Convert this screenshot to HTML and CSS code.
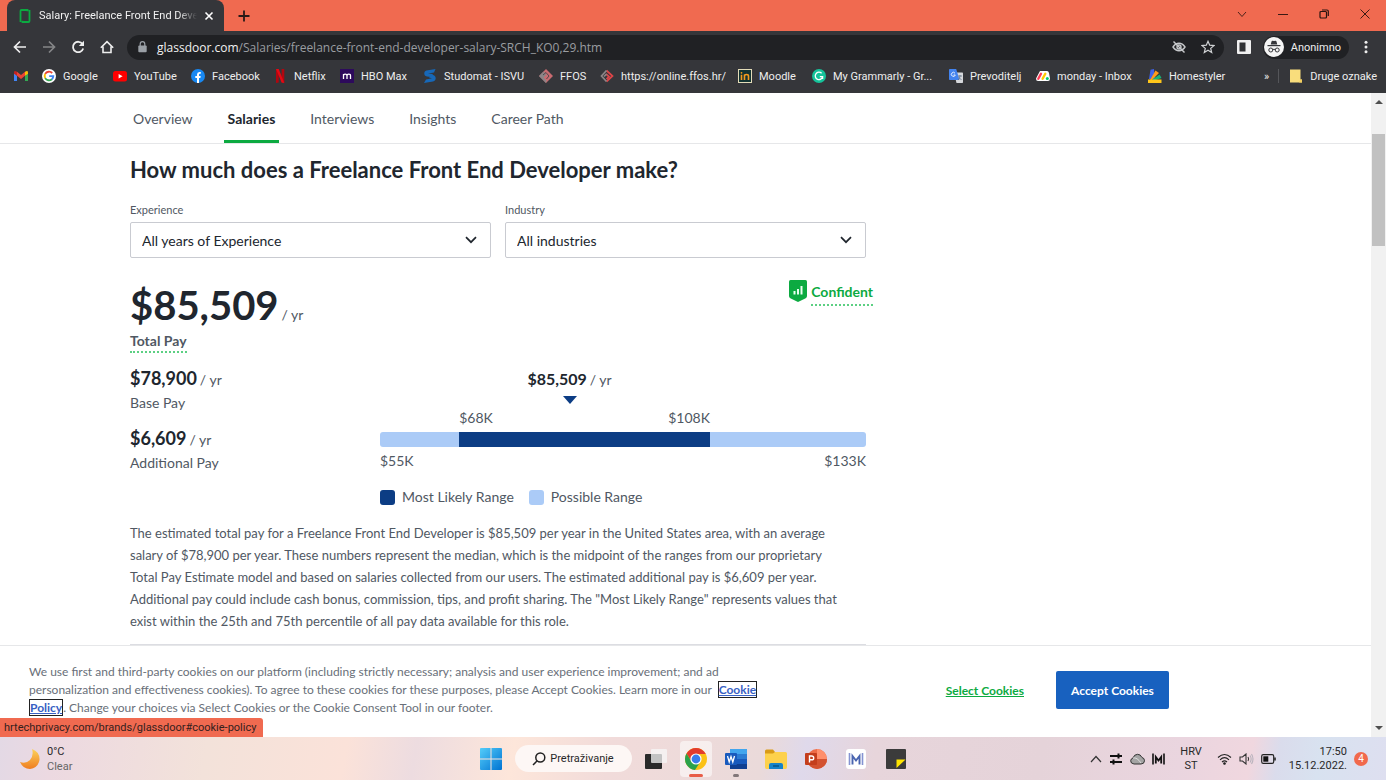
FILE: index.html
```html
<!DOCTYPE html>
<html lang="en">
<head>
<meta charset="utf-8">
<title>Salary: Freelance Front End Developer</title>
<link rel="stylesheet" href="styles.css">
</head>
<body>
<div class="tabstrip">
  <div class="tab">
    <svg class="tab-logo" viewBox="0 0 12 16" width="12" height="16" fill="none" stroke="#0caa41" stroke-width="1.800"><path d="M1.500 11.500V3Q1.500 2 2.500 2H8.500M10.500 4.500V13Q10.500 14 9.500 14H3.500M8.500 1.100V3.200M10.500 4.500V2M3.500 12.800V14.900M1.500 11.500V14"/></svg>
    <span class="tab-title">Salary: Freelance Front End Devel</span>
    <button class="tab-close" aria-label="Close tab"><svg viewBox="0 0 10 10" width="10" height="10" stroke="#fff" stroke-width="1.600"><path d="M1.500 1.500l7 7M8.500 1.500l-7 7"/></svg></button>
  </div>
  <button class="icon-btn" aria-label="New tab"><svg viewBox="0 0 12 12" width="12" height="12" stroke="#2a1a18" stroke-width="1.800"><path d="M6 .5v11M.5 6h11"/></svg></button>
  <div class="window-controls">
    <button class="icon-btn" aria-label="Search tabs"><svg viewBox="0 0 10 10" width="10" height="10" fill="none" stroke="#4b231b"><path d="M1 3l4 4.500L9 3"/></svg></button>
    <button class="icon-btn" aria-label="Minimize"><svg viewBox="0 0 10 10" width="10" height="10" stroke="#3a1a14"><path d="M0 5.500h10"/></svg></button>
    <button class="icon-btn" aria-label="Restore"><svg viewBox="0 0 10 10" width="10" height="10" fill="none" stroke="#2a1410" stroke-width="1.200"><rect x="1" y="2.500" width="6.500" height="6.500" rx="1"/><path d="M3 1h5q1.300 0 1.300 1.300V7"/></svg></button>
    <button class="icon-btn" aria-label="Close"><svg viewBox="0 0 10 10" width="10" height="10" stroke="#3a1a14"><path d="M.5 .5l9 9M9.500 .5l-9 9"/></svg></button>
  </div>
</div>

<div class="toolbar">
  <div class="nav-buttons">
    <button class="icon-btn" aria-label="Back"><svg viewBox="0 0 14 14" width="14" height="14" fill="none" stroke="#eee" stroke-width="1.700"><path d="M13 7H2M7 1.500L1.500 7L7 12.500"/></svg></button>
    <button class="icon-btn" aria-label="Forward"><svg viewBox="0 0 14 14" width="14" height="14" fill="none" stroke="#858688" stroke-width="1.700"><path d="M1 7h11M7 1.500L12.500 7L7 12.500"/></svg></button>
    <button class="icon-btn" aria-label="Reload"><svg viewBox="0 0 14 14" width="14" height="14" fill="none" stroke="#eee" stroke-width="1.800"><path d="M11.500 4A5.200 5.200 0 1 0 12.200 8.500"/><path d="M13 .8V6H7.800z" fill="#eee" stroke="none"/></svg></button>
    <button class="icon-btn" aria-label="Home"><svg viewBox="0 0 14 14" width="14" height="14" fill="none" stroke="#eee" stroke-width="1.600"><path d="M.8 7.800L7 1.600L13.200 7.800M3 6.500V12.500H11V6.500"/></svg></button>
  </div>
  <div class="omnibox">
    <svg viewBox="0 0 9 12" width="9" height="12"><path d="M2.200 5V3a2.300 2.300 0 0 1 4.600 0v2" fill="none" stroke="#9aa0a6" stroke-width="1.200"/><rect x=".3" y="4.500" width="8.400" height="6.800" rx="1" fill="#9aa0a6"/></svg>
    <span class="url"><span class="host">glassdoor.com</span>/Salaries/freelance-front-end-developer-salary-SRCH_KO0,29.htm</span>
    <button class="icon-btn" aria-label="Third-party cookies blocked"><svg viewBox="0 0 14 14" width="14" height="14" fill="none" stroke="#c7c9cc" stroke-width="1.400"><path d="M1 7Q3.500 3.200 7 3.200T13 7Q10.500 10.800 7 10.800T1 7z"/><circle cx="7" cy="7" r="2"/><path d="M1.500 1.500l11 11"/></svg></button>
    <button class="icon-btn" aria-label="Bookmark"><svg viewBox="0 0 14 14" width="14" height="14" fill="none" stroke="#d0d2d4" stroke-width="1.200"><path d="M7 1.300l1.700 3.900 4.200.4-3.200 2.800 1 4.100L7 10.300l-3.700 2.200 1-4.100L1.100 5.600l4.200-.4z"/></svg></button>
  </div>
  <button class="icon-btn panel-btn" aria-label="Side panel"><svg viewBox="0 0 14 14" width="14" height="14"><rect width="14" height="14" rx="1" fill="#f1f1f1"/><rect x="2.500" y="2.500" width="6" height="9" fill="#303134"/></svg></button>
  <button class="profile"><svg viewBox="0 0 20 20" width="20" height="20"><circle cx="10" cy="10" r="10" fill="#f5f5f5"/><path d="M6.700 7.500L7.600 4.200q.2-.6.900-.5l1.500.3 1.500-.3q.7-.1.900.5l.9 3.300z" fill="#35363a"/><rect x="3.500" y="8" width="13" height="1.200" fill="#35363a"/><g fill="none" stroke="#35363a"><circle cx="6.800" cy="13" r="2"/><circle cx="13.200" cy="13" r="2"/><path d="M8.800 12.600q1.200-.8 2.400 0"/></g></svg>Anonimno</button>
  <button class="icon-btn menu-btn" aria-label="Menu"><svg viewBox="0 0 4 14" width="4" height="14" fill="#eee"><circle cx="2" cy="2.200" r="1.500"/><circle cx="2" cy="7" r="1.500"/><circle cx="2" cy="11.800" r="1.500"/></svg></button>
</div>

<nav class="bookmarks" aria-label="Bookmarks">
  <a href="#" aria-label="Gmail"><svg viewBox="0 0 14 14" width="14" height="14"><path d="M0 3.500V12h3V6.500z" fill="#4285f4"/><path d="M14 3.500V12h-3V6.500z" fill="#34a853"/><path d="M3 2.800L7 6l4-3.200v4L7 10 3 6.800z" fill="#ea4335"/><path d="M0 3.500Q0 1 3 2.700v4.100L0 4.800z" fill="#c5221f"/><path d="M14 3.500Q14 1 11 2.700v4.100l3-2z" fill="#fbbc04"/></svg></a>
  <a href="#"><svg viewBox="0 0 14 14" width="14" height="14"><circle cx="7" cy="7" r="7" fill="#fff"/><g fill="none" stroke-width="1.900"><path d="M10.200 4A4.400 4.400 0 0 0 3.200 4.900" stroke="#ea4335"/><path d="M3.200 4.900A4.400 4.400 0 0 0 3.200 9.100" stroke="#fbbc05"/><path d="M3.200 9.100A4.400 4.400 0 0 0 9.900 10.300" stroke="#34a853"/><path d="M9.900 10.300A4.400 4.400 0 0 0 11.300 7.100H7.200" stroke="#4285f4"/></g></svg>Google</a>
  <a href="#"><svg viewBox="0 0 14 14" width="14" height="14"><rect y="2" width="14" height="10.500" rx="2.500" fill="#f00"/><path d="M5.600 5v4.500l4-2.250z" fill="#fff"/></svg>YouTube</a>
  <a href="#"><svg viewBox="0 0 14 14" width="14" height="14"><circle cx="7" cy="7" r="7" fill="#1888f2"/><path d="M6 14V9H4.300V7H6V5.500q0-2.500 2.400-2.500l1.400.1v1.700h-.9q-.9 0-.9.900V7h1.700l-.3 2H8v5z" fill="#fff"/></svg>Facebook</a>
  <a href="#"><svg viewBox="0 0 14 14" width="14" height="14"><path d="M3 0h2.700v13.600L3 14zM8.600 0h2.700v14l-2.700-.4z" fill="#b1060f"/><path d="M3 0h2.700l5.600 14-2.700-.4z" fill="#e50914"/></svg>Netflix</a>
  <a href="#"><svg viewBox="0 0 14 14" width="14" height="14"><rect width="14" height="14" fill="#2d0a5c"/><path d="M3.500 10V5M3.500 6.800q0-1.700 1.700-1.700T7 6.800V10M7 6.800q0-1.700 1.800-1.700t1.700 1.700V10" fill="none" stroke="#fff" stroke-width="1.300"/></svg>HBO Max</a>
  <a href="#"><svg viewBox="0 0 14 14" width="14" height="14" fill="#1768b8"><path d="M12.500 0L3.500 1.500Q1 2.200 1.300 5q.3 2.700 4.700 2.800L8 8l2-3-5-.5L11 3.500z"/><path d="M1 14l9-1.500q2.800-.7 2.700-3.500Q12.500 6 8.500 5.800L6 8.500l3 .7L3 10.500z"/></svg>Studomat - ISVU</a>
  <a href="#"><svg viewBox="0 0 14 14" width="14" height="14"><path d="M0 7l7-7 7 7-7 7z" fill="#c96b70"/><path d="M0 7l4.500-4.500 3 3L4.500 8.500l3 3L7 14z" fill="#8b8587"/><path d="M4 6l3-2.500 3 3.500-2.500 3" fill="none" stroke="#55474b"/></svg>FFOS</a>
  <a href="#"><svg viewBox="0 0 14 14" width="14" height="14" fill="none" stroke-width="1.700"><path d="M6.500 1.500L12.500 7l-6 5.500M6 5l3 2.500-2.500 2.500" stroke="#dd4548"/><path d="M6.500 1.500L1.500 7l5 5.500M4 7.500L6.500 5" stroke="#8d8587"/></svg>https://online.ffos.hr/</a>
  <a href="#"><svg viewBox="0 0 14 14" width="14" height="14"><rect x=".5" y=".5" width="13" height="13" fill="#123332" stroke="#e3dcb8"/><path d="M3.500 5.800V11M6.500 11V5.500M6.500 7q0-1.500 2-1.500t2 1.500V11" fill="none" stroke="#f39a1d" stroke-width="1.600"/><circle cx="3.500" cy="3.800" r=".9" fill="#f39a1d"/></svg>Moodle</a>
  <a href="#"><svg viewBox="0 0 14 14" width="14" height="14"><circle cx="7" cy="7" r="7" fill="#15c39a"/><path d="M9.600 4.300A3.700 3.700 0 1 0 10.600 7.600H7.800M10.600 7.600V10" fill="none" stroke="#fff" stroke-width="1.300"/></svg>My Grammarly - Gr...</a>
  <a href="#"><svg viewBox="0 0 14 14" width="14" height="14"><path d="M5 3.500h8.300q.7 0 .7.700v9q0 .8-.7.800H7.500z" fill="#d6d8dc"/><path d="M.8 0h6.400L10.500 11H.8Q0 11 0 10.200V.8Q0 0 .8 0z" fill="#4283ef"/><path d="M6 4.200A2 2 0 1 0 6.300 6H4.500" fill="none" stroke="#e7efff"/><path d="M9 7h4M11 6v1q0 2.500-2 4M10 8.500l2.500 2.500" stroke="#5f7186" fill="none" stroke-width=".8"/></svg>Prevoditelj</a>
  <a href="#"><svg viewBox="0 0 14 14" width="14" height="14"><path d="M4 2h7q1.500 0 2 2l1 5.500Q14 12 12 12H2q-2 0-2-2.500Z" fill="#fff"/><g stroke-width="2.400" stroke-linecap="round"><path d="M2.300 9.800l2.700-5" stroke="#ff3d57"/><path d="M6.600 9.800l2.700-5" stroke="#ffcb00"/></g><circle cx="11.300" cy="9.600" r="1.500" fill="#00ca72"/></svg>monday - Inbox</a>
  <a href="#"><svg viewBox="0 0 14 14" width="14" height="14"><path d="M2.500.7L6 0 7 10H1z" fill="#3f63e8"/><path d="M7.500 1.500L11 4 4 11H2z" fill="#ff9c1a"/><path d="M11.500 5.500L13.500 9 5 12H2z" fill="#18b277"/><path d="M0 10.500h13.500V14H0z" fill="#ffc61a"/></svg>Homestyler</a>
  <button class="more" aria-label="More bookmarks">»</button>
  <a class="other" href="#"><svg viewBox="0 0 14 14" width="14" height="14"><path d="M1 .5h10.500v10H13V13.500H1z" fill="#f9dd7c"/><path d="M11.500 10.500H13v3h-3z" fill="#f3cf5f"/></svg>Druge oznake</a>
</nav>

<div class="viewport">
  <div class="page">
    <nav class="site-nav" aria-label="Sections">
      <a href="#">Overview</a>
      <a href="#" class="active" aria-current="page">Salaries</a>
      <a href="#">Interviews</a>
      <a href="#">Insights</a>
      <a href="#">Career Path</a>
    </nav>
    <main class="content">
      <h1>How much does a Freelance Front End Developer make?</h1>
      <form class="filters">
        <div class="field">
          <label for="experience">Experience</label>
          <div class="select-box">
            <select id="experience"><option>All years of Experience</option></select>
            <svg viewBox="0 0 12 8" width="12" height="8" fill="none" stroke="#20262e" stroke-width="1.700"><path d="M1 1.200l5 5 5-5"/></svg>
          </div>
        </div>
        <div class="field">
          <label for="industry">Industry</label>
          <div class="select-box">
            <select id="industry"><option>All industries</option></select>
            <svg viewBox="0 0 12 8" width="12" height="8" fill="none" stroke="#20262e" stroke-width="1.700"><path d="M1 1.200l5 5 5-5"/></svg>
          </div>
        </div>
      </form>
      <div class="total">
        <div>
          <div class="amount total-value"><strong>$85,509</strong><span>/ yr</span></div>
          <a href="#" class="hint total-label">Total Pay</a>
        </div>
        <div class="confidence">
          <svg viewBox="0 0 18 22" width="18" height="22"><path d="M1.500 0h15Q18 0 18 1.500V16q0 1.500-1.300 2.300L9 22 1.300 18.300Q0 17.500 0 16V1.500Q0 0 1.500 0z" fill="#0caa41"/><path d="M5.500 14.500V11M9 14.500V9M12.500 14.500V6" stroke="#e8fff0" stroke-width="2"/></svg>
          <a href="#" class="hint">Confident</a>
        </div>
      </div>
      <div class="breakdown">
        <dl class="pays">
          <div><dt>Base Pay</dt><dd class="amount"><strong>$78,900</strong><span>/ yr</span></dd></div>
          <div><dt>Additional Pay</dt><dd class="amount"><strong>$6,609</strong><span>/ yr</span></dd></div>
        </dl>
        <div class="chart">
          <div class="median" style="width:78%"><div class="amount"><strong>$85,509</strong><span>/ yr</span></div><svg viewBox="0 0 14 8" width="14" height="8"><path d="M0 0h14L7 8z" fill="#0c3d84"/></svg></div>
          <div class="likely-labels" style="margin-left:16.300%;width:51.600%"><span>$68K</span><span>$108K</span></div>
          <div class="bar"><div class="likely" style="margin-left:16.300%;width:51.600%"></div></div>
          <div class="range-labels"><span>$55K</span><span>$133K</span></div>
          <div class="legend"><span class="key key-likely">Most Likely Range</span><span class="key key-possible">Possible Range</span></div>
        </div>
      </div>
      <p class="summary">The estimated total pay for a Freelance Front End Developer is $85,509 per year in the United States area, with an average salary of $78,900 per year. These numbers represent the median, which is the midpoint of the ranges from our proprietary Total Pay Estimate model and based on salaries collected from our users. The estimated additional pay is $6,609 per year. Additional pay could include cash bonus, commission, tips, and profit sharing. The "Most Likely Range" represents values that exist within the 25th and 75th percentile of all pay data available for this role.</p>
      <hr class="divider">
    </main>
    <section class="cookies" aria-label="Cookie consent">
      <p>We use first and third-party cookies on our platform (including strictly necessary; analysis and user experience improvement; and ad personalization and effectiveness cookies). To agree to these cookies for these purposes, please Accept Cookies. Learn more in our &nbsp;<a href="#">Cookie Policy</a>. Change your choices via Select Cookies or the Cookie Consent Tool in our footer.</p>
      <button class="select-cookies">Select Cookies</button>
      <button class="accept-cookies">Accept Cookies</button>
    </section>
    <div class="status">hrtechprivacy.com/brands/glassdoor#cookie-policy</div>
  </div>
  <div class="scrollbar" aria-hidden="true">
    <svg viewBox="0 0 8 4" width="8" height="4"><path d="M4 0l4 4H0z" fill="#505050"/></svg>
    <div class="track"><div class="thumb"></div></div>
    <svg viewBox="0 0 8 4" width="8" height="4"><path d="M4 4L0 0h8z" fill="#505050"/></svg>
  </div>
</div>

<footer class="taskbar">
  <div class="weather">
    <svg viewBox="0 0 22 22" width="22" height="22"><defs><linearGradient id="moon" x2="0" y2="1"><stop stop-color="#fcd25a"/><stop offset="1" stop-color="#ef7d20"/></linearGradient></defs><path d="M13 1Q21 4 20.500 12 19 20 11 21 4 21 1 14q6 2 10-2Q15 7 13 1z" fill="url(#moon)"/></svg>
    <div><div>0°C</div><div class="muted">Clear</div></div>
  </div>
  <div class="apps">
    <button class="app" aria-label="Start"><svg viewBox="0 0 22 22" width="22" height="22"><defs><linearGradient id="win" x2="1" y2="1"><stop stop-color="#54cdfa"/><stop offset="1" stop-color="#0073d2"/></linearGradient></defs><path d="M0 1q0-1 1-1h9.500v10.500H0zM11.500 0H21q1 0 1 1v9.500H11.500zM0 11.500h10.500V22H1q-1 0-1-1zM11.500 11.500H22V21q0 1-1 1h-9.500z" fill="url(#win)"/></svg></button>
    <button class="search"><svg viewBox="0 0 14 14" width="14" height="14" fill="none" stroke="#222" stroke-width="1.500"><circle cx="8.300" cy="5.500" r="4.500"/><path d="M5.200 8.800L1 13"/></svg>Pretraživanje</button>
    <button class="app" aria-label="Task view"><svg viewBox="0 0 22 22" width="22" height="22"><rect x="0" y="6" width="17" height="15" rx="1" fill="#292929"/><rect x="6" y="1" width="16" height="14" rx="1" fill="#f7f7f7" opacity=".75"/></svg></button>
    <button class="app open" aria-label="Chrome"><svg viewBox="0 0 22 22" width="22" height="22"><circle cx="11" cy="11" r="11" fill="#fbc116"/><path d="M1.500 5.500A11 11 0 0 1 20.500 5.500L20.600 6H11L6.500 13.500z" fill="#e33b2e"/><path d="M1.500 5.500A11 11 0 0 0 10 22L15.500 13.500H6.500z" fill="#2ba24c"/><circle cx="11" cy="11" r="5.600" fill="#fff"/><circle cx="11" cy="11" r="4.400" fill="#3a7cec"/></svg></button>
    <button class="app running" aria-label="Word"><svg viewBox="0 0 22 22" width="22" height="22"><rect x="5" y="1" width="17" height="20" rx="1.500" fill="#2b7cd3"/><path d="M5 1h17v5H5z" fill="#41a5ee"/><path d="M5 11h17v5H5z" fill="#185abd"/><path d="M5 16h17v5H5z" fill="#103f91"/><rect y="5" width="12" height="12" rx="1" fill="#185abd"/><path d="M2.500 8l1.700 6L6 8.500 7.800 14l1.700-6" fill="none" stroke="#fff" stroke-width="1.300"/></svg></button>
    <button class="app" aria-label="File Explorer"><svg viewBox="0 0 22 22" width="22" height="22"><path d="M0 3q0-1.500 1.500-1.500H8L10 4v4H0z" fill="#d99b17"/><path d="M0 5.500h8L10 4h10.500Q22 4 22 5.500V19q0 2-1.500 2h-19Q0 21 0 19z" fill="#fdd14b"/><path d="M4 21v-4q0-2 2-2h10q2 0 2 2v4z" fill="#1683c9"/><path d="M8 18h6" stroke="#075486" stroke-width="1.500"/></svg></button>
    <button class="app" aria-label="PowerPoint"><svg viewBox="0 0 22 22" width="22" height="22"><circle cx="12" cy="11" r="10" fill="#ed6c47"/><path d="M12 1a10 10 0 0 1 10 10H12z" fill="#ff8f6b"/><path d="M2 11h20a10 10 0 0 1-20 0z" fill="#d35230"/><rect y="5" width="12" height="12" rx="1" fill="#c43e1c"/><path d="M4.500 14.500V8h2.200q2 0 2 1.900t-2 1.900H4.500" fill="none" stroke="#fff" stroke-width="1.400"/></svg></button>
    <button class="app" aria-label="Mendeley"><svg viewBox="0 0 22 22" width="22" height="22"><rect x="1" y="1" width="20" height="20" rx="3" fill="#fff"/><path d="M4.500 5v12M17.500 5v12" stroke="#8493d2" stroke-width="1.600"/><path d="M7.500 16.500V8l3.500 4.500L14.500 8v8.500" fill="none" stroke="#4964b0" stroke-width="1.900"/></svg></button>
    <button class="app" aria-label="Sticky Notes"><svg viewBox="0 0 22 22" width="22" height="22"><path d="M2 1h18q1 0 1 1v18q0 1-1 1H2q-1 0-1-1V2q0-1 1-1z" fill="#3b3b3b"/><path d="M11.500 20V11.500h9z" fill="#ffe500"/></svg></button>
  </div>
  <div class="tray">
    <svg viewBox="0 0 12 8" width="12" height="8" fill="none" stroke="#333" stroke-width="1.200"><path d="M1 7l5-5.500L11 7"/></svg>
    <svg viewBox="0 0 14 12" width="14" height="12" fill="none" stroke="#111" stroke-width="2"><path d="M1 3h12M1 9h12M9.500 0.500v5M4.500 6.500v5"/></svg>
    <svg viewBox="0 0 15 12" width="15" height="12"><path d="M4 11Q.5 10.500.7 7.800.9 5.500 3 5 4 1.500 7.500 1.300 10.500 1.200 12 4.500q2.500.5 2.500 3.300Q14.300 11 11 11z" fill="#a4a4a4" stroke="#333"/><path d="M3 5q4-1 8 5" stroke="#ddd" fill="none"/></svg>
    <svg viewBox="0 0 13 12" width="13" height="12" fill="none" stroke="#111"><path d="M1 0.500v11M12 0.500v11" stroke-width="1.600"/><path d="M3.800 10.500V4l2.700 3.500L9.200 4v6.500" stroke-width="1.800"/></svg>
    <div class="lang"><div>HRV</div><div>ST</div></div>
    <svg viewBox="0 0 15 12" width="15" height="12" fill="none" stroke="#222" stroke-width="1.100"><path d="M1 4.500q6.500-6 13 0M3 6.800q4.500-4.200 9 0M5 9q2.500-2.400 5 0"/><circle cx="7.500" cy="10.500" r=".8" fill="#222"/></svg>
    <svg viewBox="0 0 15 12" width="15" height="12" fill="none" stroke="#333" stroke-width="1.100"><path d="M1 4h2.500L7 1v10L3.500 8H1z"/><path d="M9 4q1.300 2 0 4"/><path d="M11 2.500q2.300 3.500 0 7M12.500 1q3 5 0 10" stroke="#b8b3bd"/></svg>
    <svg viewBox="0 0 15 10" width="15" height="10"><rect x=".7" y=".7" width="12" height="8.600" rx="1.500" fill="none" stroke="#222" stroke-width="1.200"/><rect x="2.300" y="2.300" width="5" height="5.400" fill="#111"/><path d="M14 3.500v3" stroke="#222" stroke-width="1.600"/></svg>
    <div class="clock"><div>17:50</div><div>15.12.2022.</div></div>
    <span class="badge">4</span>
  </div>
</footer>
</body>
</html>
```
FILE: styles.css
```css
* { box-sizing: border-box; }
body { margin: 0; height: 100vh; display: flex; flex-direction: column; overflow: hidden; background: #fff; font-family: Lato, sans-serif; }
button { font: inherit; color: inherit; background: none; border: 0; padding: 0; cursor: pointer; }
svg { display: block; flex: none; }
a { color: inherit; text-decoration: none; }
.icon-btn { display: flex; align-items: center; justify-content: center; flex: none; }

.tabstrip, .toolbar, .bookmarks, .status, .taskbar { font-family: Roboto, "Noto Sans", sans-serif; font-size: 11px; }

/* Browser frame */
.tabstrip { display: flex; align-items: center; height: 31px; flex: none; background: #f06a50; padding-left: 7px; }
.tab { display: flex; align-items: center; align-self: stretch; width: 217px; margin-right: 14px; padding: 0 10px 0 12px; background: #35363a; border-radius: 8px 8px 0 0; color: #f1f1f1; }
.tab-title { flex: 1; min-width: 0; margin-left: 8px; white-space: nowrap; -webkit-mask-image: linear-gradient(90deg, #000 88%, transparent); mask-image: linear-gradient(90deg, #000 88%, transparent); }
.tab-close { margin-left: 7px; }
.window-controls { display: flex; gap: 31px; margin-left: auto; padding: 0 16px 4px 0; }

.toolbar { display: flex; align-items: center; height: 32px; flex: none; background: #35363a; padding: 0 18px 0 13px; color: #eee; }
.nav-buttons { display: flex; gap: 15px; margin-right: 13px; }
.omnibox { flex: 1; display: flex; align-items: center; gap: 15px; height: 25px; padding: 0 9px 0 11px; border-radius: 13px; background: #202124; }
.url { flex: 1; margin-left: -5px; font-family: "Open Sans", sans-serif; font-size: 12px; color: #9a9da1; white-space: nowrap; }
.host { color: #f1f1f1; }
.panel-btn { margin: 0 12px 0 13px; }
.profile { display: flex; align-items: center; gap: 7px; height: 23px; padding: 0 8px 0 1px; border-radius: 12px; background: #202124; color: #eee; }
.menu-btn { margin-left: 15px; }

.bookmarks { display: grid; grid-template-columns: 28px 71px 78px 82px 67px 83px 116px 61px 138px 74px 137px 87px 112px 1fr auto auto; align-items: center; height: 30px; flex: none; padding: 0 9px 4px 14px; background: #35363a; color: #eee; white-space: nowrap; }
.bookmarks a { display: flex; align-items: center; gap: 7px; }
.more { padding: 0 9px; }
.bookmarks .other { padding-left: 10px; border-left: 1px solid #55565a; }

/* Page */
.viewport { flex: 1; min-height: 0; display: flex; }
.page { position: relative; flex: 1; min-width: 0; display: flex; flex-direction: column; color: #505863; }
.site-nav { display: flex; gap: 27px; height: 51px; flex: none; padding-left: 129px; border-bottom: 1px solid #e6e7e9; font-size: 14px; }
.site-nav a { display: flex; align-items: center; padding: 3px 4px 0; border-bottom: 3px solid transparent; }
.site-nav .active { color: #20262e; font-weight: 700; border-color: #0caa41; }
.content { flex: 1; min-height: 0; width: 736px; margin-left: 130px; padding-top: 11px; font-size: 14px; }
h1 { margin: 0; font-size: 22px; line-height: 30px; font-weight: 700; color: #20262e; white-space: nowrap; }
.filters { display: grid; grid-template-columns: 1fr 1fr; gap: 14px; margin-top: 16px; }
.field label { display: block; font-size: 11px; line-height: 18px; }
.select-box { position: relative; margin-top: 3px; }
.select-box select { appearance: none; width: 100%; height: 36px; padding: 0 11px; border: 1px solid #c9cbd1; border-radius: 2px; background: #fff; color: #20262e; font: inherit; }
.select-box svg { position: absolute; right: 14px; top: 14px; pointer-events: none; }
.amount { display: flex; align-items: baseline; gap: 3px; line-height: 24px; }
.amount strong { font-size: 18px; color: #20262e; }
.total { display: flex; justify-content: space-between; height: 106px; padding-top: 21px; }
.total-value { line-height: 52px; }
.total-value strong { font-size: 40px; }
.total-value span { line-height: 24px; }
.hint { font-weight: 700; border-bottom: 2px dotted #5cd083; }
.total-label { display: inline-block; line-height: 20px; }
.confidence { display: flex; align-items: flex-start; gap: 4px; margin-right: -7px; color: #0caa41; }
.confidence svg { margin-top: 1px; }
.confidence .hint { line-height: 24px; margin-top: 1px; }
.breakdown { display: flex; }
.pays { width: 250px; margin: 0; padding-top: 2px; }
.pays > div { display: flex; flex-direction: column-reverse; justify-content: flex-end; height: 60px; }
.pays dd { margin: 0; }
.pays dt { line-height: 22px; }
.chart { flex: 1; padding-top: 3px; }
.median { display: flex; flex-direction: column; align-items: center; gap: 4px; }
.median strong { font-size: 16px; }
.likely-labels, .range-labels { display: flex; justify-content: space-between; line-height: 22px; }
.likely-labels { margin-top: 3px; }
.bar { margin: 3px 0; height: 15px; border-radius: 3px; background: #abcbf7; overflow: hidden; }
.likely { height: 100%; background: #0c3d84; }
.legend { display: flex; gap: 15px; margin-top: 14px; line-height: 22px; }
.key { display: flex; align-items: center; gap: 7px; }
.key::before { content: ""; width: 15px; height: 15px; border-radius: 3px; background: #abcbf7; }
.key-likely::before { background: #0c3d84; }
.summary { margin: 14px 0 12px; padding-right: 20px; font-size: 13px; line-height: 22px; }
.divider { margin: 0; border: 0; border-top: 2px solid #dcdde2; }

.cookies { display: flex; align-items: center; height: 92px; flex: none; padding: 0 202px 3px 29px; background: #fff; border-top: 1px solid #e6e7e9; font-size: 12px; }
.cookies p { width: 730px; margin: 0; line-height: 18px; color: #696f79; }
.cookies p a { color: #3861c4; font-weight: 700; text-decoration: underline; border: 1px solid #222; -webkit-box-decoration-break: clone; box-decoration-break: clone; }
.select-cookies { margin-left: auto; color: #0caa41; font-weight: 700; text-decoration: underline; }
.accept-cookies { margin-left: 32px; width: 113px; height: 38px; border-radius: 2px; background: #1861bf; color: #fff; font-weight: 700; }
.status { position: absolute; left: 0; bottom: 0; padding: 0 7px 0 4px; line-height: 19px; background: #f06a50; color: #33201d; border-radius: 0 3px 0 0; }

.scrollbar { width: 15px; display: flex; flex-direction: column; align-items: center; padding: 7px 1px; background: #f1f1f1; }
.track { flex: 1; align-self: stretch; margin: 30px 0 4px; }
.thumb { height: 19%; background: #c1c1c1; }

/* Taskbar */
.taskbar { display: grid; grid-template-columns: 1fr auto 1fr; align-items: center; height: 43px; flex: none; color: #282828; background: linear-gradient(100deg, #e3d9e5 0%, #ecd9e1 4%, #f3e2da 15%, #fbe2d9 25%, #eddce0 30%, #fde6da 37%, #f1dbda 44%, #eadada 55%, #dfd9eb 58%, #e7d5db 63%, #e5d3d9 75%, #ead5df 85%, #f0d7df 90%, #dadcec 92%, #d8e2f0 95%, #dedff0 100%); }
.weather { display: flex; align-items: center; gap: 6px; padding-left: 19px; line-height: 15px; }
.muted { color: #666; }
.apps { display: flex; align-items: center; gap: 8px; }
.app { position: relative; display: flex; align-items: center; justify-content: center; width: 32px; height: 36px; border-radius: 4px; }
.open { background: rgba(255, 255, 255, .55); }
.open::after, .running::after { content: ""; position: absolute; bottom: 0; width: 14px; height: 3px; border-radius: 2px; background: #e85d48; }
.running::after { width: 6px; background: #817779; }
.search { display: flex; align-items: center; justify-content: center; gap: 4px; width: 117px; height: 27px; border-radius: 14px; background: #fdf7f5; }
.tray { display: flex; align-items: center; justify-content: flex-end; gap: 7px; padding-right: 18px; line-height: 14px; }
.lang { margin: 0 8px; text-align: center; }
.clock { margin-left: 6px; text-align: right; }
.badge { width: 14px; height: 14px; border-radius: 50%; background: #f1694c; color: #fff; text-align: center; font-size: 10px; }
```
